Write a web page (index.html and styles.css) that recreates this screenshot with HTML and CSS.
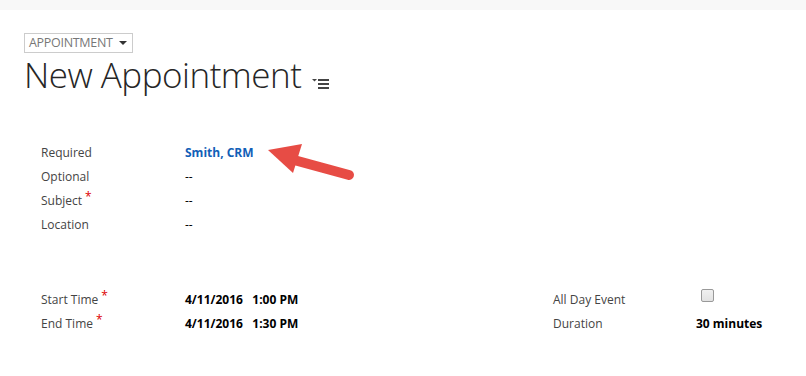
FILE: index.html
```html
<!DOCTYPE html>
<html lang="en">
<head>
    <meta charset="UTF-8">
    <meta name="viewport" content="width=device-width, initial-scale=1.0">
    <title>New Appointment</title>
    <link rel="stylesheet" href="styles.css">
</head>
<body>

    <div class="topbar"></div>

    <div class="page">
        <div class="header">
            <div class="entity-switch">
                <span>APPOINTMENT</span>
                <span class="caret"></span>
            </div>
            <h1>New Appointment
                <svg class="menu-icon" width="18" height="14" viewBox="0 0 18 14">
                    <path d="M0 3 L5 3 L2.5 5.5 Z" fill="#444"/>
                    <rect x="6" y="3" width="11" height="2" fill="#444"/>
                    <rect x="6" y="7" width="11" height="2" fill="#444"/>
                    <rect x="6" y="11" width="11" height="2" fill="#444"/>
                </svg>
            </h1>
        </div>

        <!-- Participants -->
        <div class="section people">
            <div class="label">Required</div>
            <div class="value link">Smith, CRM</div>
            <div class="label">Optional</div>
            <div class="value plain">--</div>
            <div class="label">Subject<span class="req">*</span></div>
            <div class="value plain">--</div>
            <div class="label">Location</div>
            <div class="value plain">--</div>

            <svg class="arrow" width="100" height="50" viewBox="0 0 100 50">
                <line x1="89" y1="40" x2="34" y2="25" stroke="#e74c45" stroke-width="10" stroke-linecap="round"/>
                <path d="M8 15 L42 9 L33 38 Z" fill="#e74c45"/>
            </svg>
        </div>

        <!-- Timing -->
        <div class="section timing">
            <div class="label">Start Time<span class="req">*</span></div>
            <div class="value">4/11/2016&nbsp;&nbsp;&nbsp;1:00 PM</div>
            <div class="label">All Day Event</div>
            <div class="value"><span class="checkbox"></span></div>

            <div class="label">End Time<span class="req">*</span></div>
            <div class="value">4/11/2016&nbsp;&nbsp;&nbsp;1:30 PM</div>
            <div class="label">Duration</div>
            <div class="value">30 minutes</div>
        </div>
    </div>

</body>
</html>
```

FILE: styles.css
```css
body {
    margin: 0;
    padding: 0;
    background-color: #fff;
    font-family: "Open Sans", "Noto Sans", sans-serif;
    color: #444;
    width: 806px;
    height: 376px;
    overflow: hidden;
}

.topbar {
    height: 10px;
    background-color: #f8f8f8;
}

.page {
    padding-left: 24px;
}

.header {
    padding-top: 23px;
}

.entity-switch {
    display: flex;
    width: max-content;
    align-items: center;
    gap: 6px;
    height: 18px;
    padding: 0 5px 0 4px;
    border: 1px solid #ccc;
    font-size: 12.5px;
    letter-spacing: -0.3px;
    color: #777;
    line-height: 18px;
}

.caret {
    width: 0;
    height: 0;
    border-left: 4px solid transparent;
    border-right: 4px solid transparent;
    border-top: 4px solid #333;
}

h1 {
    margin: -2px 0 0 0;
    font-size: 35px;
    font-weight: 300;
    color: #262626;
    letter-spacing: -0.5px;
    line-height: 48px;
}

.menu-icon {
    margin-left: 2px;
    vertical-align: -2px;
}

.section {
    display: grid;
    position: relative;
    padding-left: 17px;
    font-size: 12px;
}

.people {
    margin-top: 42px;
    grid-template-columns: 144px 1fr;
    grid-auto-rows: 24px;
}

.timing {
    margin-top: 51px;
    grid-template-columns: 144px 368px 143px 1fr;
    grid-auto-rows: 24px;
}

.label {
    line-height: 24px;
    color: #444;
}

.value {
    line-height: 24px;
    font-weight: 700;
    color: #000;
}

.value.plain {
    font-weight: 400;
}

.value.link {
    color: #1160b7;
}

.req {
    color: #d00;
    font-size: 12px;
    margin-left: 3px;
    vertical-align: 4px;
    line-height: 0;
}

.checkbox {
    display: inline-block;
    width: 11px;
    height: 11px;
    margin-left: 5px;
    margin-top: -11px;
    vertical-align: middle;
    border: 1px solid #999;
    border-radius: 2px;
    background: linear-gradient(#f0f0f0, #e2e2e2);
}

.arrow {
    position: absolute;
    left: 236px;
    top: -6px;
}
```
